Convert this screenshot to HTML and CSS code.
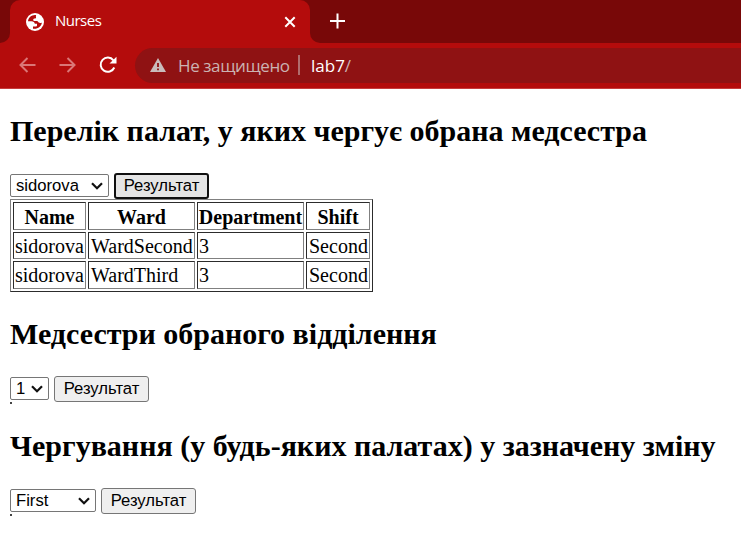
FILE: index.html
```html
<!DOCTYPE html>
<html lang="uk">
<head>
<meta charset="utf-8">
<title>Nurses</title>
<link rel="stylesheet" href="styles.css">
</head>
<body>
<header class="browser">
  <div class="tabs">
    <div class="edge"><span></span></div>
    <div class="tab">
      <svg class="globe" width="18" height="18" viewBox="0 0 18 18"><circle cx="9" cy="9" r="9" fill="#fff"/><path d="M10.200 2.200C6 1.500 2.300 4.500 2 8.200H5.500C7.400 8.200 8.600 9 8.800 10.800H11V12.600C11 13.400 10.200 13.700 8.800 13.500H7V15.700C11.300 16.500 15.600 13.500 15.900 9.500C15 10.200 13.700 10.300 12.700 9.600C12 9.100 11.900 8.100 11 8.100H8.700C7.500 8.100 7 7.200 7.300 6.300C7.700 5.200 9 5.800 9.800 5.200C10.600 4.600 9.400 3.300 10.200 2.200Z" fill="#b40c0c"/></svg>
      <span class="title">Nurses</span>
      <svg class="close" width="12" height="12" viewBox="0 0 12 12"><path d="M1.300 1.300L10.700 10.700M10.700 1.300L1.300 10.700" stroke="#fff" stroke-width="2"/></svg>
    </div>
    <div class="strip">
      <svg width="16" height="16" viewBox="0 0 16 16"><path d="M7.500 .5V15.500M0 8H15" stroke="#fff" stroke-width="2"/></svg>
    </div>
  </div>
  <div class="toolbar">
    <svg class="arrow" width="18" height="16" viewBox="0 0 18 16"><path d="M16.500 8H2M8.500 1L1.500 8L8.500 15" fill="none" stroke="#da7777" stroke-width="2"/></svg>
    <svg class="arrow" width="18" height="16" viewBox="0 0 18 16"><path d="M.5 8H15M8.500 1L15.500 8L8.500 15" fill="none" stroke="#da7777" stroke-width="2"/></svg>
    <svg class="reload" width="18" height="18" viewBox="0 0 18 18"><path d="M14.400 4.300A7.100 7.100 0 1 0 15.300 11.500" fill="none" stroke="#fff" stroke-width="2"/><path d="M17.500 .7V7.500H10.500Z" fill="#fff"/></svg>
    <div class="address">
      <svg width="16" height="14" viewBox="0 0 16 14"><path d="M8 0L16 14H0Z" fill="#c9bcbc"/><path d="M8 5V9M8 10.500V12.200" stroke="#8f1213" stroke-width="1.800"/></svg>
      <span class="warning">Не защищено</span><i class="divider"></i><span class="url">lab7<span>/</span></span>
    </div>
  </div>
</header>
<main>
  <h2>Перелік палат, у яких чергує обрана медсестра</h2>
  <form class="controls">
    <div class="picker nurse"><select aria-label="Name"><option>sidorova</option></select><svg width="12" height="8" viewBox="0 0 12 8"><path d="M1 1.200L6 6.200L11 1.200"/></svg></div>
    <button type="button" class="active">Результат</button>
  </form>
  <table>
    <colgroup><col class="c1"><col class="c2"><col class="c3"><col class="c4"></colgroup>
    <tr class="head"><th>Name</th><th>Ward</th><th>Department</th><th>Shift</th></tr>
    <tr class="first"><td>sidorova</td><td>WardSecond</td><td>3</td><td>Second</td></tr>
    <tr class="second"><td>sidorova</td><td>WardThird</td><td>3</td><td>Second</td></tr>
  </table>
  <h2 class="department">Медсестри обраного відділення</h2>
  <form class="controls">
    <div class="picker number"><select aria-label="Department"><option>1</option></select><svg width="12" height="8" viewBox="0 0 12 8"><path d="M1 1.200L6 6.200L11 1.200"/></svg></div>
    <button type="button">Результат</button>
  </form>
  <div class="empty"></div>
  <h2 class="shift">Чергування (у будь-яких палатах) у зазначену зміну</h2>
  <form class="controls">
    <div class="picker turn"><select aria-label="Shift"><option>First</option></select><svg width="12" height="8" viewBox="0 0 12 8"><path d="M1 1.200L6 6.200L11 1.200"/></svg></div>
    <button type="button">Результат</button>
  </form>
  <div class="empty"></div>
</main>
</body>
</html>
```
FILE: styles.css
```css
* { box-sizing: border-box; }
body { margin: 0; height: 540px; overflow: hidden; background: #fff; color: #000; font: 20px "Liberation Serif", serif; }
svg { display: block; flex: none; }
.browser { height: 89px; background: #b40c0c; border-bottom: 1px solid #c63d3d; font-family: "Open Sans", "Noto Sans", sans-serif; }
.tabs { display: flex; height: 43px; background: linear-gradient(to right, #780808 20px, #b40c0c 20px); }
.edge { width: 10px; background: #b40c0c; }
.edge span { display: block; height: 43px; background: #780808; border-bottom-right-radius: 10px; }
.tab { display: flex; align-items: center; width: 300px; padding: 0 14px 0 16px; background: #b40c0c; border-radius: 10px 10px 0 0; box-shadow: 10px -10px 0 #780808; clip-path: inset(0 0 0 0); }
.title { margin: 0 0 3px 11px; color: #fff; font: 15px/20px "Open Sans", sans-serif; letter-spacing: -.5px; }
.close { margin-left: auto; }
.strip { flex: 1; padding: 13px 0 0 20px; background: #780808; border-bottom-left-radius: 10px; }
.toolbar { display: flex; align-items: center; height: 45px; padding: 0 0 1px 19px; }
.arrow { margin-right: 22px; }
.address { display: flex; align-items: center; height: 35px; flex: 1; margin: 0 0 0 18px; padding-left: 15px; background: #8f1213; border-radius: 18px 0 0 18px; font-size: 17px; white-space: nowrap; }
.warning { width: 112px; margin-left: 12px; color: #cbb2b2; letter-spacing: -.4px; }
.divider { width: 2px; height: 20px; margin: 0 11px 0 8px; background: #b06d6d; }
.url { color: #fff; }
.url span { color: #cbb2b2; }
main { display: flex; flex-direction: column; align-items: flex-start; padding: 25px 10px 0; }
h2 { height: 34px; margin: 0 0 25px; font-size: 30px; line-height: 34px; white-space: nowrap; }
.department, .shift { margin-top: 25px; }
.controls { display: flex; align-items: flex-start; gap: 5px; height: 26px; }
.picker { display: grid; align-items: center; height: 23px; margin-top: 1px; border: 1px solid #767676; border-radius: 2px; }
.picker select { grid-area: 1 / 1; width: 100%; height: 21px; padding: 0 0 0 5px; appearance: none; border: 0; background: transparent; color: #000; font: 16.667px/21px "Liberation Sans", sans-serif; }
.picker svg { grid-area: 1 / 1; justify-self: end; margin-right: 5px; pointer-events: none; }
.picker path { fill: none; stroke: #111; stroke-width: 2.2; }
.nurse { width: 99px; }
.number { width: 39px; }
.turn { width: 86px; }
button { width: 95px; height: 26px; padding: 0; border: 1px solid #767676; border-radius: 3px; background: #efefef; color: #000; font: 16.667px/22px "Liberation Sans", sans-serif; white-space: nowrap; }
.active { border: 2px solid #101010; background: #e5e5e5; }
table { width: 363px; height: 93px; table-layout: fixed; border: 1px solid; border-color: #808080 #2c2c2c #2c2c2c #808080; border-spacing: 2px; }
th, td { overflow: hidden; padding: 0 1px; border: 1px solid; border-color: #2c2c2c #808080 #808080 #2c2c2c; line-height: 22px; white-space: nowrap; }
th { padding: 2px 0 0; }
td { text-align: left; }
td:nth-child(even) { padding-left: 2px; }
.c1 { width: 73px; }
.c2, .c3 { width: 107px; }
.c4 { width: 64px; }
.head, .second { height: 28px; }
.first { height: 27px; }
.empty { width: 2px; height: 2px; background: #444; }
```
